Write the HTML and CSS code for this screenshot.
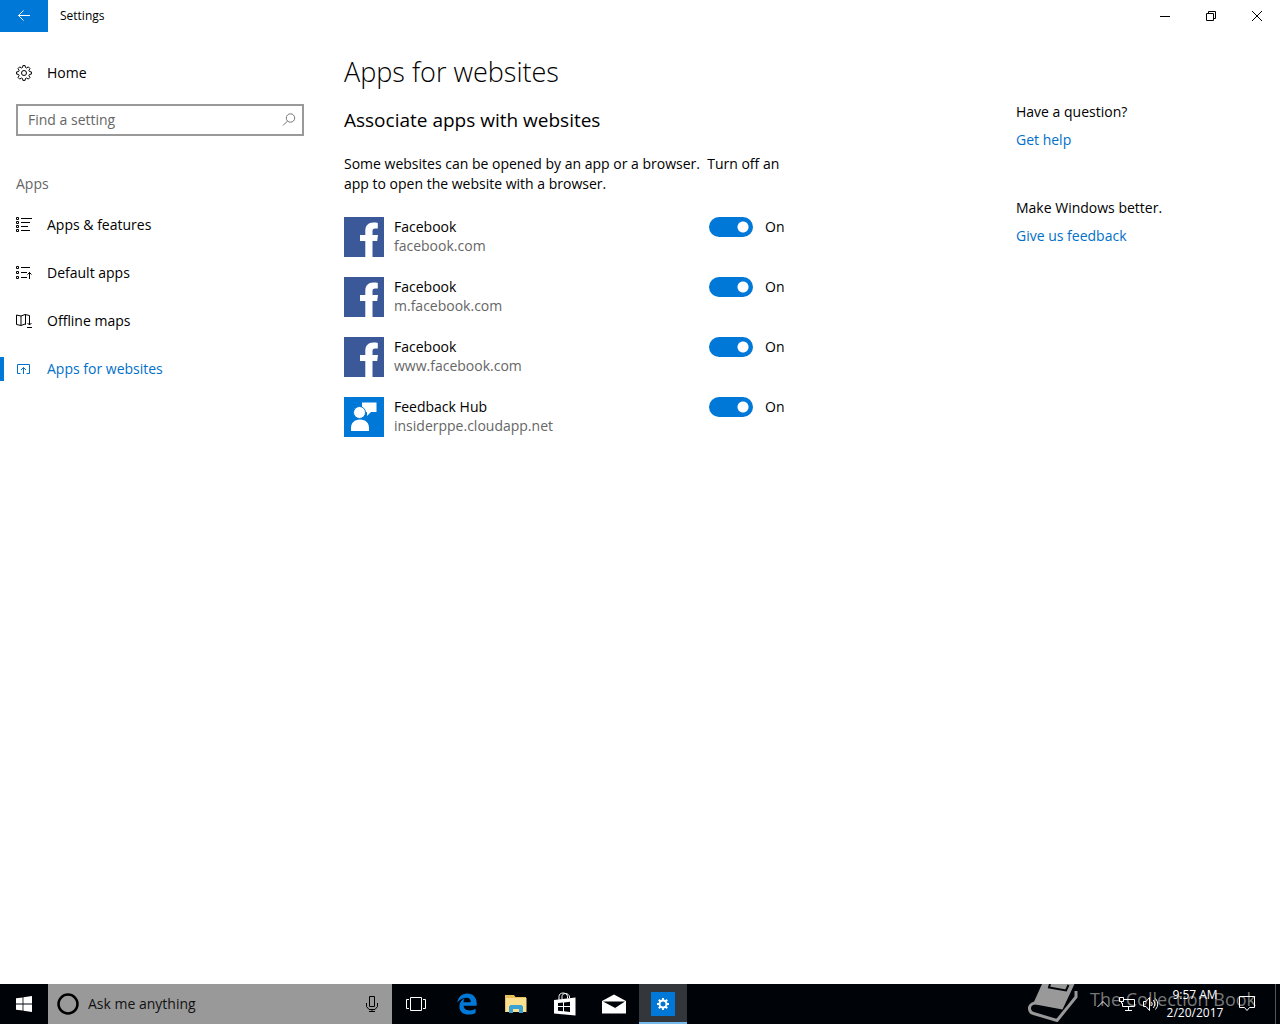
FILE: index.html
```html
<!DOCTYPE html>
<html lang="en">
<head>
    <meta charset="UTF-8">
    <meta name="viewport" content="width=device-width, initial-scale=1.0">
    <title>Settings</title>
    <link rel="stylesheet" href="styles.css">
</head>
<body>
    <svg class="symbols" aria-hidden="true">
        <symbol id="facebook" viewBox="0 0 40 40">
            <rect width="40" height="40" fill="#3b5998"/>
            <path d="M21.300 40V24H16V18h5.300V14c0-5.500 3.200-8.400 8-8.400 2 0 3.600.1 4.500.3v5.600h-2.500c-2.400 0-2.800 1.100-2.800 2.900V18h5.500l-.8 6h-4.700V40z" fill="#fff"/>
        </symbol>
    </svg>

    <header class="titlebar">
        <button class="back" aria-label="Back">
            <svg width="16" height="16" viewBox="0 0 16 16"><path d="M14 7.500H2.500M7.500 2.500l-5 5 5 5"/></svg>
        </button>
        <span class="window-title">Settings</span>
        <div class="window-buttons">
            <button aria-label="Minimize"><svg width="10" height="10"><path d="M0 5.500h10"/></svg></button>
            <button aria-label="Restore"><svg width="10" height="10"><path d="M.5 2.500h7v7h-7zM2.500 2.500v-2h7v7h-2"/></svg></button>
            <button aria-label="Close"><svg width="10" height="10"><path d="M0 0l10 10M10 0L0 10"/></svg></button>
        </div>
    </header>

    <div class="settings">
        <nav class="sidebar">
            <a href="#" class="nav-item home">
                <svg width="16" height="16" viewBox="0 0 16 16"><path d="M6.900.6h2.200l.4 1.900 1.100.5 1.700-1.100 1.700 1.700L12.900 5.300l.5 1.200 2 .4v2.200l-2 .4-.5 1.200 1.100 1.700-1.700 1.700-1.700-1.100-1.100.5-.4 1.900H6.900l-.4-1.900-1.100-.5-1.700 1.100L2 12.400l1.100-1.700-.5-1.200-2-.4V6.900l2-.4.5-1.200L2 3.600l1.700-1.700L5.400 3l1.100-.5z"/><circle cx="8" cy="8" r="2.500"/></svg>
                <span>Home</span>
            </a>
            <div class="search-box">
                <input type="text" placeholder="Find a setting" aria-label="Find a setting">
                <svg width="14" height="14" viewBox="0 0 14 14"><circle cx="8.500" cy="5" r="4.200"/><path d="M5.500 8L1 12.500"/></svg>
            </div>
            <h2 class="nav-heading">Apps</h2>
            <a href="#" class="nav-item">
                <svg width="16" height="16" viewBox="0 0 16 16"><path d="M.5.500h2v2h-2zM.5 4.500h2v2h-2zM.5 8.500h2v2h-2zM.5 12.500h2v2h-2zM5 1.500h11M5 5.500h9M5 9.500h7M5 13.500h9"/></svg>
                <span>Apps &amp; features</span>
            </a>
            <a href="#" class="nav-item">
                <svg width="16" height="16" viewBox="0 0 16 16"><path d="M.5 1.500h2v2h-2zM.5 6.500h2v2h-2zM.5 11.500h2v2h-2zM5 2.500h9M5 7.500h6M5 12.500h6M13.500 14V7M11.500 9.500l2-2 2 2"/></svg>
                <span>Default apps</span>
            </a>
            <a href="#" class="nav-item">
                <svg width="16" height="16" viewBox="0 0 16 16"><path d="M10 11.500l-1-.5-4 1.500-4.500-1V2l4.500 1 4-1.500 4.500 1V5M5 3v9.500M9.500 1.500V11M13.500 5v7M11.500 10l2 2 2-2M11 14.500h5"/></svg>
                <span>Offline maps</span>
            </a>
            <a href="#" class="nav-item active">
                <svg width="16" height="16" viewBox="0 0 16 16"><path d="M4.500 12.500h-3v-9h12v9h-3M7.500 13V6.500M5 9l2.500-2.500L10 9"/></svg>
                <span>Apps for websites</span>
            </a>
        </nav>

        <main class="content">
            <h1>Apps for websites</h1>
            <h2>Associate apps with websites</h2>
            <p class="intro">Some websites can be opened by an app or a browser.&nbsp; Turn off an app to open the website with a browser.</p>

            <ul class="app-list">
                <li>
                    <svg class="app-icon"><use href="#facebook"/></svg>
                    <label for="app1">Facebook<small>facebook.com</small></label>
                    <input type="checkbox" id="app1" class="toggle" checked>
                    <span class="state">On</span>
                </li>
                <li>
                    <svg class="app-icon"><use href="#facebook"/></svg>
                    <label for="app2">Facebook<small>m.facebook.com</small></label>
                    <input type="checkbox" id="app2" class="toggle" checked>
                    <span class="state">On</span>
                </li>
                <li>
                    <svg class="app-icon"><use href="#facebook"/></svg>
                    <label for="app3">Facebook<small>www.facebook.com</small></label>
                    <input type="checkbox" id="app3" class="toggle" checked>
                    <span class="state">On</span>
                </li>
                <li>
                    <svg class="app-icon" viewBox="0 0 40 40">
                        <rect width="40" height="40" fill="#0078d7"/>
                        <path d="M18 5.500h14.500V15H27l-4 4V15h-5z" fill="#fff"/>
                        <circle cx="15.500" cy="15.500" r="6" fill="#fff" stroke="#0078d7"/>
                        <path d="M7 34v-3c0-5 3.500-8.500 9-8.500s9 3.500 9 8.500v3z" fill="#fff"/>
                    </svg>
                    <label for="app4">Feedback Hub<small>insiderppe.cloudapp.net</small></label>
                    <input type="checkbox" id="app4" class="toggle" checked>
                    <span class="state">On</span>
                </li>
            </ul>
        </main>

        <aside class="help">
            <section>
                <p>Have a question?</p>
                <a href="#">Get help</a>
            </section>
            <section>
                <p>Make Windows better.</p>
                <a href="#">Give us feedback</a>
            </section>
        </aside>
    </div>

    <footer class="taskbar">
        <button class="task" aria-label="Start">
            <svg width="16" height="16" viewBox="0 0 16 16"><path d="M0 2.300l6.600-.9v6.200H0zM7.400 1.300L16 0v7.600H7.400zM0 8.400h6.600v6.200L0 13.700zM7.400 8.400H16V16l-8.600-1.300z" fill="#fff"/></svg>
        </button>
        <div class="cortana">
            <svg width="22" height="22" viewBox="0 0 22 22"><circle cx="11" cy="11" r="9.500" fill="none" stroke="#000" stroke-width="2.500"/></svg>
            <input type="text" placeholder="Ask me anything" aria-label="Ask me anything">
            <button aria-label="Speak">
                <svg width="12" height="16" viewBox="0 0 12 16" fill="none" stroke="#000"><path d="M3.500.5h5v10h-5zM.5 7v3.500l2.500 3h6l2.500-3V7M6 13.500v2M3 15.500h6"/></svg>
            </button>
        </div>
        <button class="task" aria-label="Task View">
            <svg width="20" height="14" viewBox="0 0 20 14" fill="none" stroke="#fff"><path d="M4.500.5h11v13h-11zM3 2.500H.5v9H3M17 2.500h2.500v9H17"/></svg>
        </button>
        <div class="pinned">
            <button class="task" aria-label="Microsoft Edge">
                <svg width="20" height="22" viewBox="0 0 20 22"><path d="M.3 9.600C1.200 4 4.800.5 10.200.5c6 0 9.500 4.200 9.500 9.700v2.600H6.600c.2 3 2.600 4.600 6 4.600 2.200 0 4.200-.6 6-1.700v4.300c-2 1.100-4.300 1.600-7 1.600-5.600 0-9.200-3.200-9.200-8.200 0-3.600 2-6.400 5.200-7.800C6.800 6.800 6.700 8 6.600 9.200h7.200c0-2.700-1.300-4.400-4.100-4.400-3.700 0-7 1.700-9.400 4.800z" fill="#0078d7"/></svg>
            </button>
            <button class="task" aria-label="File Explorer">
                <svg width="22" height="20" viewBox="0 0 22 20"><path d="M0 1h9l1.500 2H21v15H0z" fill="#e8bf5a"/><path d="M1 4h20.500v14H1z" fill="#fbe08f"/><path d="M4 19v-6.500L5.500 11h11l1.500 1.500V19h-4v-4H8v4z" fill="#3ba2d4"/></svg>
            </button>
            <button class="task" aria-label="Store">
                <svg width="22" height="24" viewBox="0 0 22 24"><path d="M5 8V4.500c0-2 1.500-3.500 4-3.500s4.500 1.500 4.500 3.500v2M8 7V4.500C8 2.500 9.500 1.500 11.500 1.500s4 1.500 4 3.500v1" fill="none" stroke="#fff"/><path d="M0 8l21.500-2.500v18L0 21.500z" fill="#fff"/><path d="M4 11l5-.5V14H4zM10 10.400l6-.7V14h-6zM4 15h5v4.200L4 18.700zM10 15h6v5l-6-.7z" fill="#000308"/></svg>
            </button>
            <button class="task" aria-label="Mail">
                <svg width="24" height="20" viewBox="0 0 24 20"><path d="M0 7L12 .5 24 7v12.500H0z" fill="#fff"/><path d="M1 7.500h22L13 14l4 2z" fill="#000308"/></svg>
            </button>
            <button class="task running" aria-label="Settings">
                <svg width="24" height="24" viewBox="0 0 24 24"><rect width="24" height="24" fill="#0078d7"/><circle cx="12" cy="12" r="3.500" fill="none" stroke="#fff" stroke-width="2"/><path d="M12 6v2.500M12 15.500V18M6 12h2.500M15.500 12H18M7.800 7.800l1.700 1.700M14.500 14.500l1.700 1.700M16.200 7.800l-1.700 1.700M9.500 14.500l-1.700 1.700" stroke="#fff" stroke-width="2"/></svg>
            </button>
        </div>

        <div class="watermark">
            <svg width="50" height="38" viewBox="0 0 50 38"><path d="M14 0h32.500L34.500 25.500 5 20z" fill="#999"/><path d="M22 0l-1 3.500 17 3L40.500 1" fill="none" stroke="#000308" stroke-width="2"/><path d="M11 19C5 18 1 21 1.500 25c.3 3 2 4 4 4.500L29 36.500 48 13V7" fill="none" stroke="#999" stroke-width="3"/></svg>
            <span>The Collection Book</span>
        </div>

        <div class="tray">
            <button aria-label="Show hidden icons"><svg width="12" height="8" viewBox="0 0 12 8"><path d="M.5 7L6 1.500 11.500 7"/></svg></button>
            <button aria-label="Network"><svg width="16" height="14" viewBox="0 0 16 14"><path d="M5 2.500h10.500v7h-12V6M.5.500h4v4h-4zM2.500 4.500v2M9.500 10v3M6 13.500h7"/></svg></button>
            <button aria-label="Volume"><svg width="17" height="16" viewBox="0 0 17 16"><path d="M.5 5.500H3l3.500-4v13l-3.500-4H.5zM8.500 6q1.500 2 0 4M10.500 4q3 4 0 8M12.500 2.500q4.500 5.500 0 11"/></svg></button>
            <time class="clock">9:57 AM<br>2/20/2017</time>
            <button class="notifications" aria-label="Action Center"><svg width="16" height="16" viewBox="0 0 16 16"><path d="M.5.500h15v11h-5l-2.500 3-2.500-3h-5z"/></svg></button>
        </div>
    </footer>
</body>
</html>
```

FILE: styles.css
```css
* {
    box-sizing: border-box;
}
body {
    margin: 0;
    min-height: 100vh;
    display: flex;
    flex-direction: column;
    background: white;
    color: black;
    font-family: "Open Sans", "Noto Sans", sans-serif;
    font-size: 14px;
    line-height: 20px;
}
h1, h2, p, ul {
    margin: 0;
    padding: 0;
    font-weight: normal;
}
a {
    color: #0070c8;
    text-decoration: none;
}
button {
    display: flex;
    align-items: center;
    justify-content: center;
    padding: 0;
    border: none;
    background: none;
}
svg {
    display: block;
    flex-shrink: 0;
}
.symbols {
    position: absolute;
    width: 0;
    height: 0;
}

/* title bar */
.titlebar {
    display: flex;
    align-items: center;
    height: 32px;
}
.titlebar svg {
    fill: none;
    stroke: black;
}
.back {
    width: 48px;
    height: 32px;
    background: #0078d7;
}
.titlebar .back svg {
    stroke: white;
}
.window-title {
    margin-left: 12px;
    font-size: 12px;
}
.window-buttons {
    display: flex;
    margin-left: auto;
}
.window-buttons button {
    width: 46px;
    height: 32px;
}

/* page */
.settings {
    flex: 1;
    display: grid;
    grid-template-columns: 320px 672px 1fr;
}
.sidebar {
    padding-top: 17px;
}
.nav-item {
    display: flex;
    align-items: center;
    gap: 15px;
    height: 48px;
    padding-left: 16px;
    color: black;
}
.nav-item svg {
    fill: none;
    stroke: currentColor;
}
.nav-item.active {
    color: #0070c8;
    background: linear-gradient(#0078d7, #0078d7) 0 50% / 4px 24px no-repeat;
}
.search-box {
    display: flex;
    align-items: center;
    height: 32px;
    margin: 7px 16px 0;
    padding: 0 6px 0 10px;
    border: 2px solid #999;
}
.search-box svg {
    fill: none;
    stroke: #777;
}
input[type="text"] {
    flex: 1;
    min-width: 0;
    padding: 0;
    border: none;
    outline: none;
    background: none;
    font: inherit;
}
.search-box input::placeholder {
    color: #666;
}
.nav-heading {
    margin: 38px 16px 7px;
    font-size: 14px;
    line-height: 20px;
    color: #666;
}

.content {
    padding: 20px 24px;
}
.content h1 {
    font-size: 27px;
    font-weight: 300;
    line-height: 40px;
}
.content h2 {
    margin-top: 16px;
    font-size: 19px;
    line-height: 24px;
}
.intro {
    max-width: 460px;
    margin-top: 22px;
}
.app-list {
    margin-top: 23px;
    list-style: none;
}
.app-list li {
    display: flex;
    align-items: flex-start;
    height: 40px;
    margin-bottom: 20px;
}
.app-icon {
    width: 40px;
    height: 40px;
}
.app-list label {
    width: 315px;
    margin-left: 10px;
    line-height: 19px;
}
.app-list small {
    display: block;
    font-size: 14px;
    color: #666;
}
.toggle {
    appearance: none;
    width: 44px;
    height: 20px;
    margin: 0;
    border-radius: 10px;
    background: radial-gradient(circle at 34px 10px, white 5px, #0078d7 6px);
}
.toggle:not(:checked) {
    background: radial-gradient(circle at 10px 10px, white 5px, #999 6px);
}
.state {
    margin-left: 12px;
}

.help {
    padding: 70px 24px 0;
}
.help section {
    margin-bottom: 48px;
}
.help p {
    margin-bottom: 8px;
}
.help a {
    display: block;
}

/* taskbar */
.taskbar {
    position: relative;
    display: flex;
    height: 40px;
    background: #000308;
    color: white;
}
.task {
    width: 48px;
    height: 40px;
}
.cortana {
    display: flex;
    align-items: center;
    gap: 9px;
    width: 344px;
    padding: 0 14px 0 9px;
    background: #999;
}
.cortana input::placeholder {
    color: #111;
}
.pinned {
    display: flex;
    gap: 1px;
    margin-left: 3px;
}
.running {
    background: #33373c;
    border-bottom: 2px solid #76b9ed;
    padding-top: 2px;
}
.watermark {
    position: absolute;
    top: 0;
    right: 24px;
    display: flex;
    gap: 12px;
    color: #777;
    font-size: 18px;
    line-height: 30px;
}
.tray {
    position: relative;
    display: flex;
    align-items: center;
    margin-left: auto;
    margin-right: 4px;
    border-right: 1px solid #555;
}
.tray button {
    width: 24px;
    height: 40px;
}
.tray svg {
    fill: none;
    stroke: white;
}
.clock {
    width: 64px;
    margin-right: 4px;
    font-size: 12px;
    line-height: 18px;
    text-align: center;
}
.tray .notifications {
    width: 32px;
    margin-right: 12px;
}
```
